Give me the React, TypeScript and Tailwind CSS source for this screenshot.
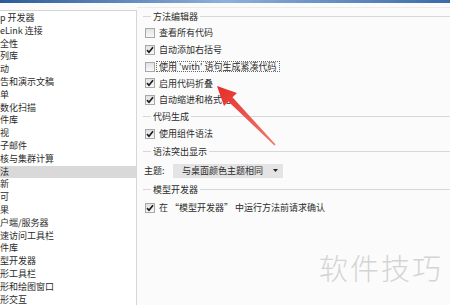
import { JSX } from "react";

const treeItems = [
    "p 开发器", "eLink 连接", "全性", "列库", "动", "告和演示文稿", "单", "数化扫描",
    "件库", "视", "子邮件", "核与集群计算", "法", "新", "可", "果", "户端/服务器",
    "速访问工具栏", "件库", "型开发器", "形工具栏", "形和绘图窗口", "形交互"
];

function Check({ checked }: { checked: boolean }): JSX.Element {
    return (
        <span className="w-[10px] h-[10px] shrink-0 border border-[#a8a8a8] bg-linear-to-b from-[#e2e2e2] to-[#f8f8f8] flex items-center justify-center">
            {checked && (
                <svg width="8" height="8" viewBox="0 0 8 8">
                    <path d="M1 4.1 L3 6.3 L7 1.2" fill="none" stroke="#1c1c1c" strokeWidth="1.6" />
                </svg>
            )}
        </span>
    );
}

function GroupHeader({ title, h }: { title: string, h: string }): JSX.Element {
    return (
        <div className={"flex items-center " + h}>
            <div className="w-[8px] h-px bg-[#d8d8d8]" />
            <span className="px-[2px]">{title}</span>
            <div className="flex-1 h-px bg-[#d8d8d8]" />
        </div>
    );
}

function Option({ label, checked, focused }: { label: string, checked: boolean, focused?: boolean }): JSX.Element {
    return (
        <div className="flex items-center h-[16.75px] pl-[2px] gap-[4px]">
            <Check checked={checked} />
            {focused ? (
                <span className="-ml-[3px] px-[2px] h-[11px] flex items-center border border-dotted border-[#6a6a6a]">{label}</span>
            ) : (
                <span>{label}</span>
            )}
        </div>
    );
}

export default function App(): JSX.Element {
    return (
        <div className="relative w-[450px] h-[305px] overflow-hidden bg-[#fbfbfb] text-[9px] text-[#2b2b2b] font-['Noto_Sans_CJK_SC','Noto_Sans',sans-serif]">
            {/* title bar strip */}
            <div className="h-[3px] bg-linear-to-r from-[#2c5a98] via-[#8eb0da] to-[#3c6aa8]" />

            <div className="flex">
                {/* tree list */}
                <div className="w-[137px] h-[302px] mt-[7px] bg-white border-t border-r border-[#d6d6d6] pt-px">
                    {treeItems.map((item, i) => (
                        <div key={i}
                        className={"h-[12.8px] leading-[12.8px] whitespace-nowrap " + (i === 12 ? "bg-[#d9d9d9]" : "")}>
                            {item}
                        </div>
                    ))}
                </div>

                {/* settings */}
                <div className="flex-1 pl-[6px]">
                    <div className="mt-[4px] h-px bg-[#ececec] -ml-[6px]" />
                    <GroupHeader title="方法编辑器" h="h-[16.75px]" />
                    <Option label="查看所有代码" checked={false} />
                    <Option label="自动添加右括号" checked={true} />
                    <Option label="使用 'with' 语句生成紧凑代码" checked={false} focused />
                    <Option label="启用代码折叠" checked={true} />
                    <Option label="自动缩进和格式化" checked={true} />
                    <GroupHeader title="代码生成" h="h-[16.75px]" />
                    <Option label="使用组件语法" checked={true} />
                    <GroupHeader title="语法突出显示" h="h-[19.4px]" />
                    <div className="flex items-center h-[18.6px] pl-px">
                        <span className="w-[29px]">主题:</span>
                        <div className="w-[110px] h-[14px] bg-[#e4e4e4] flex items-center justify-between pl-[9px] pr-[5px]">
                            <span>与桌面颜色主题相同</span>
                            <svg width="5" height="3" viewBox="0 0 5 3">
                                <path d="M0 0 H5 L2.5 3 Z" fill="#222" />
                            </svg>
                        </div>
                    </div>
                    <GroupHeader title="模型开发器" h="h-[19.4px]" />
                    <Option label="在 “模型开发器” 中运行方法前请求确认" checked={true} />
                </div>
            </div>

            {/* red annotation arrow */}
            <svg className="absolute inset-0 pointer-events-none" width="450" height="305">
                <defs>
                    <linearGradient id="arrow" x1="217" y1="86" x2="275" y2="145" gradientUnits="userSpaceOnUse">
                        <stop offset="0" stopColor="#e52d27" />
                        <stop offset="1" stopColor="#f07a72" />
                    </linearGradient>
                </defs>
                <polygon
                points="217,86 237,93 232.5,97.3 275.6,144.4 274.4,145.6 228.3,101.5 224,106"
                fill="url(#arrow)" />
            </svg>

            {/* watermark */}
            <div className="absolute left-[319px] top-[253px] text-[29px] font-light leading-none tracking-[2px] text-[#d4d4d4] whitespace-nowrap">
                软件技巧
            </div>
        </div>
    );
}
